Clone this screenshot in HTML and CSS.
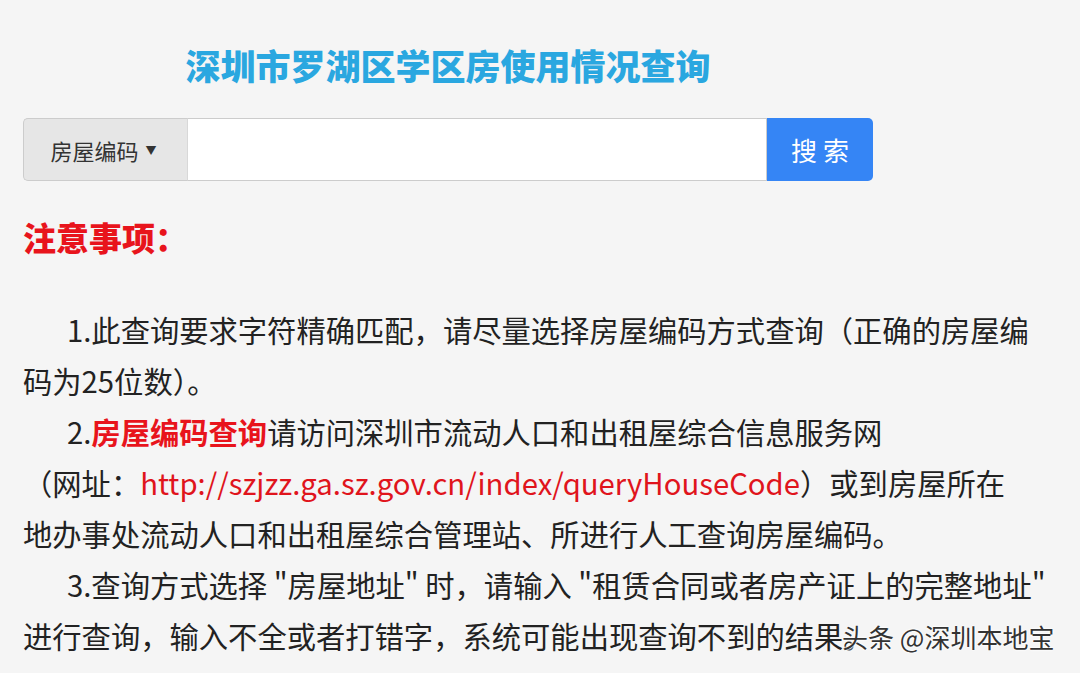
FILE: index.html
```html
<!DOCTYPE html>
<html lang="zh-CN">
<head>
    <meta charset="UTF-8">
    <meta name="viewport" content="width=device-width, initial-scale=1.0">
    <title>深圳市罗湖区学区房使用情况查询</title>
    <link rel="stylesheet" href="styles.css">
</head>
<body>
    <div class="search-box">
        <h1>深圳市罗湖区学区房使用情况查询</h1>
        <div class="search-form">
            <button class="search-type">房屋编码 <span class="caret">&#9660;</span></button>
            <input type="text" class="search-input">
            <button class="search-btn">搜 索</button>
        </div>
    </div>

    <div class="notice">
        <h2>注意事项：</h2>
        <p>1.此查询要求字符精确匹配，请尽量选择房屋编码方式查询（正确的房屋编<br>码为25位数）。</p>
        <p>2.<strong>房屋编码查询</strong>请访问深圳市流动人口和出租屋综合信息服务网<br>（网址：<a href="#">http://szjzz.ga.sz.gov.cn/index/queryHouseCode</a>）或到房屋所在<br>地办事处流动人口和出租屋综合管理站、所进行人工查询房屋编码。</p>
        <p>3.查询方式选择 "房屋地址" 时，请输入 "租赁合同或者房产证上的完整地址"<br>进行查询，输入不全或者打错字，系统可能出现查询不到的结果。</p>
    </div>

    <div class="watermark">头条 @深圳本地宝</div>
</body>
</html>
```

FILE: styles.css
```css
html, body {
    margin: 0;
    height: 100%;
    overflow: hidden;
}
body {
    font-family: "Noto Sans CJK SC", "Microsoft YaHei", sans-serif;
    background-color: #f5f5f5;
    color: #222;
    padding: 0 23px;
    position: relative;
}
.search-box {
    width: 850px;
}
h1 {
    margin: 43px 0 0;
    font-size: 35px;
    line-height: 44px;
    font-weight: 900;
    text-align: center;
    color: #2aa7e0;
}
.search-form {
    display: flex;
    height: 63px;
    margin-top: 31px;
}
.search-type {
    width: 164px;
    border: 1px solid #ccc;
    border-right: none;
    border-radius: 5px 0 0 5px;
    background-color: #e6e6e6;
    color: #333;
    font-family: inherit;
    font-size: 22px;
    padding: 0 4px 0 0;
}
.caret {
    font-size: 11px;
    vertical-align: 5px;
    margin-left: 2px;
}
.search-input {
    flex: 1;
    border: 1px solid #ccc;
    border-left: 1px solid #d8d8d8;
    background: #fff;
    margin: 0;
    padding: 0 10px;
}
.search-btn {
    width: 106px;
    border: none;
    border-radius: 0 5px 5px 0;
    background-color: #3585f5;
    color: #fff;
    font-family: inherit;
    font-size: 26px;
    padding: 0;
}
.notice h2 {
    margin: 34px 0 0;
    font-size: 33px;
    line-height: 44px;
    color: #e8141c;
    font-weight: 900;
}
.notice p {
    margin: 0;
    font-size: 29.3px;
    line-height: 51px;
    text-indent: 1.5em;
    white-space: nowrap;
}
.notice p:first-of-type {
    margin-top: 45px;
}
.notice strong {
    color: #e8141c;
}
.notice a {
    color: #e0141c;
    text-decoration: none;
}
.watermark {
    position: absolute;
    left: 842px;
    top: 618px;
    font-size: 26px;
    line-height: 38px;
    color: #333;
    text-shadow: 0 0 2px #fff, 0 0 2px #fff, 0 0 3px #fff;
}
```
